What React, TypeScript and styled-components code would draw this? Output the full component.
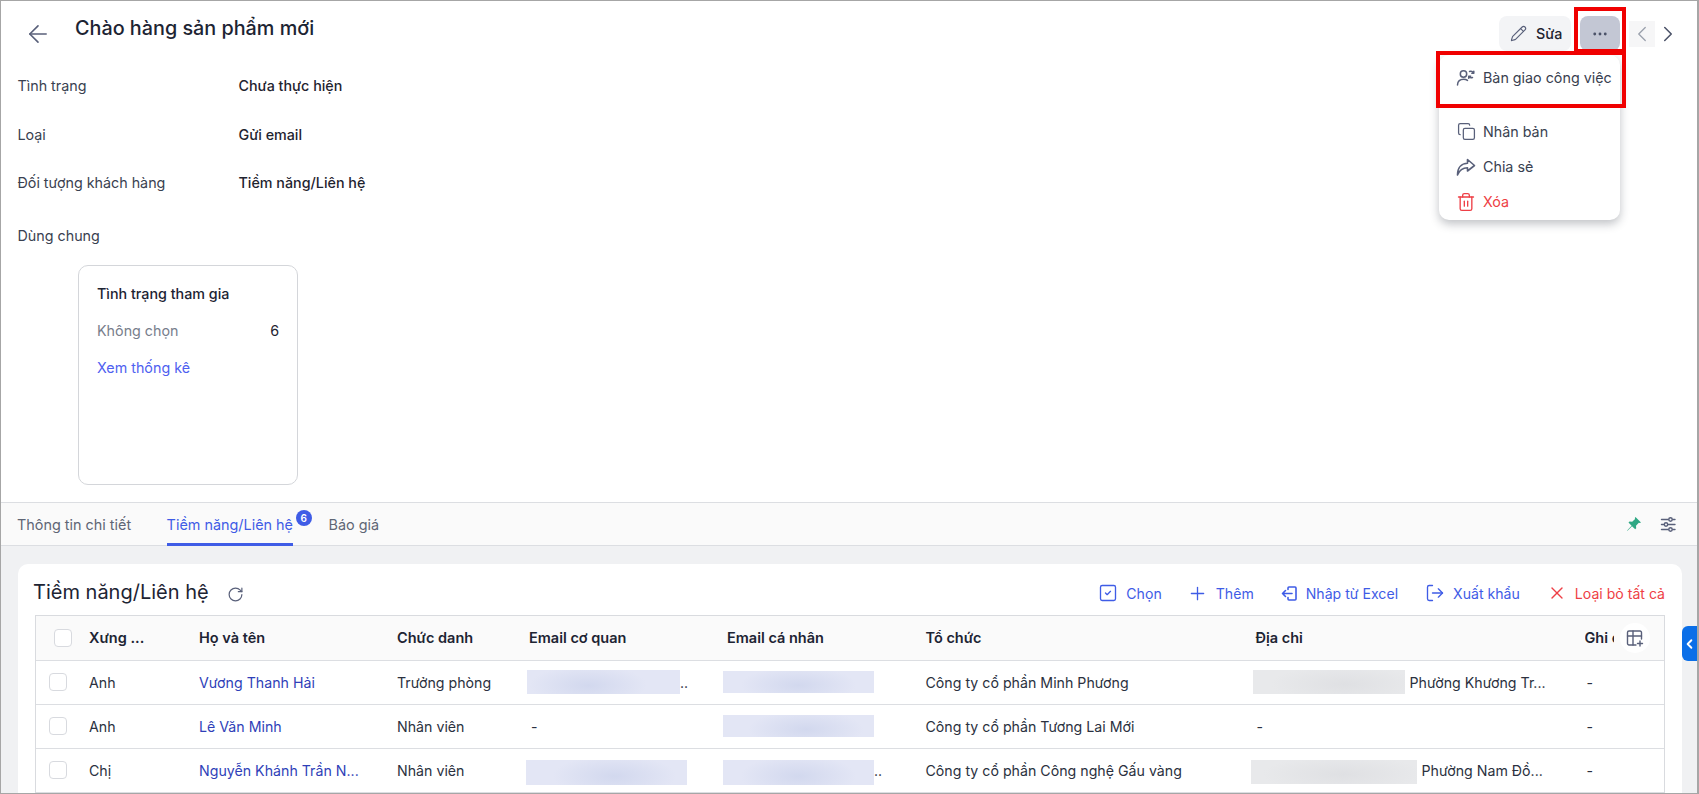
import React from "react";
import styled, { createGlobalStyle } from "styled-components";
import {
  ArrowLeft, Pencil, Ellipsis, ChevronLeft, ChevronRight, Copy, Trash2, RotateCw,
  SquareCheck, Plus, LogOut, X,
} from "lucide-react";

const Global = createGlobalStyle`
  html, body { margin: 0; padding: 0; background: #fff; overflow: hidden; }
  * { box-sizing: border-box; }
  body { font-family: Inter, "Noto Sans", sans-serif; font-size: 14.3px; color: #1f2430; }
`;

const Frame = styled.div`
  position: relative; width: 1699px; height: 794px; overflow: hidden;
  display: flex; flex-direction: column; background: #fff;
  border: 1px solid #a6a6a6; border-right-width: 2px;
`;
const Top = styled.section`height: 501px; flex: none; display: flex; flex-direction: column; padding: 0 0 0 16.5px;`;
const Header = styled.header`height: 61px; flex: none; display: flex; align-items: flex-start;`;
const BackBtn = styled.span`display: flex; color: #59607a; margin: 19px 0 0 6px; width: 51.5px;`;
const Title = styled.h1`margin: 13px 0 0; font-size: 19.8px; line-height: 28px; font-weight: 500; color: #1d2433;`;
const Fields = styled.div`display: flex; flex-direction: column; margin-top: -0.5px;`;
const Field = styled.div<{ $mt?: number }>`
  height: 48.5px; display: flex; align-items: center; margin-top: ${p => p.$mt ?? 0}px;
`;
const FieldLabel = styled.div`width: 221px; color: #394150;`;
const FieldValue = styled.div`color: #1f2430; font-weight: 500;`;
const Stat = styled.div`
  margin: 5.5px 0 0 60.5px; width: 220px; height: 220px; flex: none; padding: 18px 18px;
  border: 1px solid #d4d6da; border-radius: 10px;
  display: flex; flex-direction: column;
`;
const StatTitle = styled.div`font-weight: 500; line-height: 20px; color: #1d2433;`;
const StatRow = styled.div`display: flex; justify-content: space-between; line-height: 20px; margin-top: 17px; color: #787e8c;`;
const StatNum = styled.span`color: #1f2430;`;
const StatLink = styled.a`color: #4f5ff0; line-height: 20px; margin-top: 17px;`;

const TabBar = styled.nav`
  height: 44px; flex: none; display: flex; align-items: stretch; gap: 35.5px; padding: 0 0 0 16px;
  background: #fafafa; border-top: 1px solid #dcdee2; border-bottom: 1px solid #dcdee2; position: relative;
`;
const Tab = styled.div<{ $on?: boolean }>`
  position: relative; display: flex; align-items: center; font-size: 14.4px;
  color: ${p => (p.$on ? "#3f5ce6" : "#5f6675")}; margin-bottom: -1px;
  border-bottom: 3px solid ${p => (p.$on ? "#3f5ce6" : "transparent")};
  padding-top: 2px;
`;
const Badge = styled.span`
  position: absolute; left: 129px; top: 7px; width: 16px; height: 16px; border-radius: 50%;
  background: #3f5ce6; color: #fff; font-size: 10px; font-weight: 600;
  display: flex; align-items: center; justify-content: center;
`;
const TabTools = styled.div`
  margin-left: auto; display: flex; align-items: center; gap: 18px; padding-right: 20px; color: #59607a;
`;
const Panel = styled.section`flex: 1; min-height: 0; background: #f0f1f3; padding: 18px 15px 0 17px;`;
const Card = styled.div`
  background: #fff; border-radius: 10px 10px 0 0; padding: 0 17px; height: 300px;
`;
const CardHead = styled.div`height: 51px; display: flex; align-items: center; padding-top: 5px;`;
const CardTitle = styled.h2`margin: 0 0 0 -2px; font-size: 20px; font-weight: 400; color: #1d2433; line-height: 28px;`;
const Refresh = styled.span`display: flex; color: #59607a; margin-left: 18px; margin-top: 4px;`;
const Actions = styled.div`margin-left: auto; display: flex; align-items: center; gap: 27px; padding-top: 2px;`;
const Action = styled.span<{ $red?: boolean; $mr?: number }>`
  display: flex; align-items: center; gap: 8px; font-size: 14.1px;
  margin-right: ${p => p.$mr ?? 0}px;
  color: ${p => (p.$red ? "#ee3f46" : "#3f5ce6")};
`;
const Table = styled.div`position: relative; border: 1px solid #d9dbdf; border-bottom: 0;`;
const Row = styled.div<{ $head?: boolean }>`
  display: grid; grid-template-columns: 53px 110px 198px 132px 198px 198.5px 330px 329px 1fr;
  align-items: center;
  height: ${p => (p.$head ? 44.5 : 44)}px;
  background: ${p => (p.$head ? "#fafafa" : "#fff")};
  border-bottom: 1px solid #dcdee2;
  font-size: ${p => (p.$head ? 14.5 : 14.2)}px;
  font-weight: ${p => (p.$head ? 600 : 400)};
  color: ${p => (p.$head ? "#1d2433" : "#2b3140")};
`;
const Cell = styled.div`display: flex; align-items: center; min-width: 0; white-space: nowrap;`;
const Box = styled.span<{ $head?: boolean }>`
  display: block; width: 18px; height: 18px; border: 1px solid #d8dadf; border-radius: 4px; background: #fff;
  margin-left: ${p => (p.$head ? 18 : 13)}px;
`;
const NameLink = styled.span`color: #2f3fb8;`;
const Redact = styled.span<{ $w: number; $h: number; $ml?: number; $mt?: number; $grey?: boolean; $at?: number }>`
  display: block; flex: none; width: ${p => p.$w}px; height: ${p => p.$h}px;
  margin-left: ${p => p.$ml ?? 0}px; margin-top: ${p => p.$mt ?? 0}px;
  background: ${p => p.$grey
    ? `radial-gradient(ellipse 60% 100% at ${p.$at ?? 50}% 60%, #dfe0e3, #e8e9eb 80%)`
    : `radial-gradient(ellipse 45% 100% at ${p.$at ?? 50}% 65%, #d2d8ee, #e3e6f5 85%)`};
`;
const Clip = styled.span`display: block; width: 29px; overflow: hidden;`;
const Dots = styled.span`color: #2b3140;`;
const AddressText = styled.span`margin-left: 5px;`;
const Dash = styled.span<{ $ml?: number }>`margin-left: ${p => p.$ml ?? 2}px;`;
const ColBtn = styled.span`
  position: absolute; right: 14px; top: 7px; width: 30px; height: 30px; border-radius: 50%;
  background: #fff; color: #59607a; display: flex; align-items: center; justify-content: center;
`;

const TopActions = styled.div`
  position: absolute; top: 15px; left: 1498px; display: flex; align-items: center;
`;
const EditBtn = styled.span`
  width: 72px; height: 35px; border-radius: 8px; background: #f3f4f6; display: flex; align-items: center;
  gap: 9px; padding-left: 11px; font-weight: 500; color: #1f2430;
`;
const MoreBtn = styled.span`
  margin-left: 9px; width: 40px; height: 35px; border-radius: 8px; background: #c3c7d4; color: #4b5268;
  display: flex; align-items: center; justify-content: center;
`;
const PrevBtn = styled.span`
  margin-left: 9px; width: 26px; height: 26px; background: #f6f6f7; color: #9aa0ac;
  display: flex; align-items: center; justify-content: center;
`;
const NextBtn = styled.span`margin-left: 0; width: 26px; color: #4b5268; display: flex; justify-content: center;`;
const Menu = styled.div`
  position: absolute; left: 1438px; top: 54px; width: 181px; height: 165px; background: #fff; border-radius: 10px;
  box-shadow: 0 4px 10px rgba(30,35,50,.28); display: flex; flex-direction: column; padding-top: 5px;
`;
const MenuItem = styled.div<{ $red?: boolean }>`
  height: 35px; display: flex; align-items: center; gap: 7px; padding-left: 17px;
  color: ${p => (p.$red ? "#ee3f46" : "#394150")};
`;
const MenuIcon = styled.span<{ $red?: boolean }>`
  display: flex; width: 20px; justify-content: center; color: ${p => (p.$red ? "#ee3f46" : "#59607a")};
`;
const MenuGap = styled.div`height: 19px;`;
const Mark = styled.div<{ $l: number; $t: number; $w: number; $h: number }>`
  position: absolute; left: ${p => p.$l}px; top: ${p => p.$t}px; width: ${p => p.$w}px; height: ${p => p.$h}px;
  border: 4px solid #f00000; pointer-events: none;
`;
const SideTab = styled.span`
  position: absolute; right: 0; top: 625px; width: 15px; height: 35px; background: #0b6fe8;
  border-radius: 6px 0 0 6px; color: #fff; display: flex; align-items: center; justify-content: center;
`;

const HandOver = () => (
  <svg width="20" height="20" viewBox="0 0 20 20" fill="none" stroke="currentColor" strokeWidth="1.5" strokeLinecap="round" strokeLinejoin="round">
    <circle cx="7.500" cy="6" r="3.200" />
    <path d="M1.500 17c0-3.800 2.600-5.800 6-5.800 1.600 0 3 .4 4 1.200" />
    <path d="M13.500 3.500a3 3 0 0 1 4 1.500M17.800 3.200v2h-2" />
    <path d="M16.500 9.500a3 3 0 0 1-3.500-1M12.700 10.300V8.300h2" />
  </svg>
);
const ShareArrow = () => (
  <svg width="20" height="20" viewBox="0 0 20 20" fill="none" stroke="currentColor" strokeWidth="1.6" strokeLinejoin="round" strokeLinecap="round">
    <path d="M11.500 2.500 18.500 8.500 11.500 14v-3.200C7 10.800 3.500 13 1.500 18c0-7 3.800-11.500 10-11.700z" />
  </svg>
);
const PinIcon = () => (
  <svg width="16" height="16" viewBox="0 0 16 16" fill="#2fa884">
    <path d="M9.500 1 15 6.500l-1.200.6-1-.4-2.800 3 .2 2.600-1 1L6 10.200l-4.500 4.600-.4-.4L5.600 9.800 2.500 6.600l1-1 2.700.2 2.900-2.800-.3-1z" />
  </svg>
);
const SliderIcon = () => (
  <svg width="17" height="17" viewBox="0 0 17 17" fill="none" stroke="currentColor" strokeWidth="1.4" strokeLinecap="round">
    <path d="M1.500 3.500h13.500M1.500 8.500h13.500M1.500 13.500h13.500" />
    <circle cx="10.500" cy="3.500" r="1.700" fill="#fafafa" />
    <circle cx="6" cy="8.500" r="1.700" fill="#fafafa" />
    <circle cx="10.500" cy="13.500" r="1.700" fill="#fafafa" />
  </svg>
);
const ImportIcon = () => (
  <svg width="17" height="17" viewBox="0 0 17 17" fill="none" stroke="currentColor" strokeWidth="1.6" strokeLinecap="round" strokeLinejoin="round">
    <path d="M7 4.500V3a1 1 0 0 1 1-1h6a1 1 0 0 1 1 1v11a1 1 0 0 1-1 1H8a1 1 0 0 1-1-1v-1.500" />
    <path d="M11 8.500H1.500M4.500 5.500l-3 3 3 3" />
  </svg>
);
const TablePlus = () => (
  <svg width="18" height="18" viewBox="0 0 18 18" fill="none" stroke="currentColor" strokeWidth="1.4" strokeLinecap="round">
    <path d="M10 16H3a1.500 1.500 0 0 1-1.500-1.500v-11A1.500 1.500 0 0 1 3 2h11a1.500 1.500 0 0 1 1.500 1.500V10" />
    <path d="M1.500 7h14M7 2v14M14 12v5M11.500 14.500h5" />
  </svg>
);

const heads = ["Xưng ...", "Họ và tên", "Chức danh", "Email cơ quan", "Email cá nhân", "Tổ chức", "Địa chỉ"];

export default function App() {
  return (
    <>
      <Global />
      <Frame>
        <Top>
          <Header>
            <BackBtn><ArrowLeft size={28} strokeWidth={1.4} /></BackBtn>
            <Title>Chào hàng sản phẩm mới</Title>
          </Header>
          <Fields>
            <Field><FieldLabel>Tình trạng</FieldLabel><FieldValue>Chưa thực hiện</FieldValue></Field>
            <Field><FieldLabel>Loại</FieldLabel><FieldValue>Gửi email</FieldValue></Field>
            <Field><FieldLabel>Đối tượng khách hàng</FieldLabel><FieldValue>Tiềm năng/Liên hệ</FieldValue></Field>
            <Field $mt={4}><FieldLabel>Dùng chung</FieldLabel></Field>
          </Fields>
          <Stat>
            <StatTitle>Tình trạng tham gia</StatTitle>
            <StatRow><span>Không chọn</span><StatNum>6</StatNum></StatRow>
            <StatLink>Xem thống kê</StatLink>
          </Stat>
        </Top>
        <TabBar>
          <Tab>Thông tin chi tiết</Tab>
          <Tab $on>Tiềm năng/Liên hệ<Badge>6</Badge></Tab>
          <Tab>Báo giá</Tab>
          <TabTools><PinIcon /><SliderIcon /></TabTools>
        </TabBar>
        <Panel>
          <Card>
            <CardHead>
              <CardTitle>Tiềm năng/Liên hệ</CardTitle>
              <Refresh><RotateCw size={17} strokeWidth={1.7} /></Refresh>
              <Actions>
                <Action $mr={-2}><SquareCheck size={20} strokeWidth={1.6} />Chọn</Action>
                <Action><Plus size={21} strokeWidth={1.5} />Thêm</Action>
                <Action><ImportIcon />Nhập từ Excel</Action>
                <Action><LogOut size={20} strokeWidth={1.6} />Xuất khẩu</Action>
                <Action $red><X size={20} strokeWidth={1.6} />Loại bỏ tất cả</Action>
              </Actions>
            </CardHead>
            <Table>
              <Row $head>
                <Cell><Box $head /></Cell>
                {heads.map(h => <Cell key={h}>{h}</Cell>)}
                <Cell><Clip>Ghi chú</Clip></Cell>
              </Row>
              <Row>
                <Cell><Box /></Cell>
                <Cell>Anh</Cell>
                <Cell><NameLink>Vương Thanh Hải</NameLink></Cell>
                <Cell>Trưởng phòng</Cell>
                <Cell><Redact $w={153} $h={24} $ml={-2} $at={40} /><Dots>..</Dots></Cell>
                <Cell><Redact $w={151} $h={22} $ml={-4} $at={50} /></Cell>
                <Cell>Công ty cổ phần Minh Phương</Cell>
                <Cell><Redact $grey $w={152} $h={24} $ml={-3} $at={60} /><AddressText>Phường Khương Tr...</AddressText></Cell>
                <Cell><Dash>-</Dash></Cell>
              </Row>
              <Row>
                <Cell><Box /></Cell>
                <Cell>Anh</Cell>
                <Cell><NameLink>Lê Văn Minh</NameLink></Cell>
                <Cell>Nhân viên</Cell>
                <Cell><Dash>-</Dash></Cell>
                <Cell><Redact $w={151} $h={22} $ml={-4} $at={55} /></Cell>
                <Cell>Công ty cổ phần Tương Lai Mới</Cell>
                <Cell><Dash $ml={1}>-</Dash></Cell>
                <Cell><Dash>-</Dash></Cell>
              </Row>
              <Row>
                <Cell><Box /></Cell>
                <Cell>Chị</Cell>
                <Cell><NameLink>Nguyễn Khánh Trần N...</NameLink></Cell>
                <Cell>Nhân viên</Cell>
                <Cell><Redact $w={161} $h={25} $ml={-3} $mt={4} $at={55} /></Cell>
                <Cell><Redact $w={151} $h={25} $ml={-4} $mt={4} $at={50} /><Dots>..</Dots></Cell>
                <Cell>Công ty cổ phần Công nghệ Gấu vàng</Cell>
                <Cell><Redact $grey $w={166} $h={24} $ml={-5} $mt={4} $at={55} /><AddressText>Phường Nam Đồ...</AddressText></Cell>
                <Cell><Dash>-</Dash></Cell>
              </Row>
              <ColBtn><TablePlus /></ColBtn>
            </Table>
          </Card>
        </Panel>
        <TopActions>
          <EditBtn><Pencil size={17} strokeWidth={1.6} color="#59607a" />Sửa</EditBtn>
          <MoreBtn><Ellipsis size={18} strokeWidth={1.8} /></MoreBtn>
          <PrevBtn><ChevronLeft size={28} strokeWidth={1.2} /></PrevBtn>
          <NextBtn><ChevronRight size={28} strokeWidth={1.4} /></NextBtn>
        </TopActions>
        <Menu>
          <MenuItem><MenuIcon><HandOver /></MenuIcon>Bàn giao công việc</MenuItem>
          <MenuGap />
          <MenuItem><MenuIcon><Copy size={19} strokeWidth={1.6} /></MenuIcon>Nhân bản</MenuItem>
          <MenuItem><MenuIcon><ShareArrow /></MenuIcon>Chia sẻ</MenuItem>
          <MenuItem $red><MenuIcon $red><Trash2 size={20} strokeWidth={1.6} /></MenuIcon>Xóa</MenuItem>
        </Menu>
        <Mark $l={1573} $t={6} $w={52} $h={46} />
        <Mark $l={1435} $t={50} $w={190} $h={57} />
        <SideTab><ChevronLeft size={20} strokeWidth={3} /></SideTab>
      </Frame>
    </>
  );
}
